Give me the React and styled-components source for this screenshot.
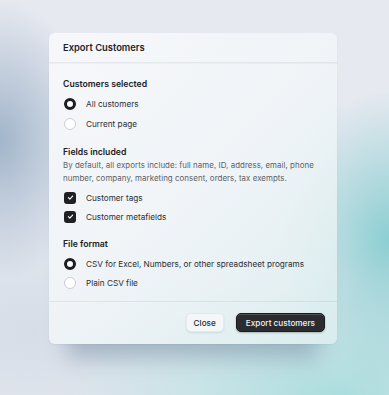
import React, { useState } from "react";
import styled, { createGlobalStyle } from "styled-components";

const GlobalStyle = createGlobalStyle`
  * { box-sizing: border-box; }
  html, body {
    margin: 0;
    padding: 0;
    width: 389px;
    height: 395px;
    overflow: hidden;
  }
  body {
    font-family: Inter, "Noto Sans", sans-serif;
    color: #1f2124;
    -webkit-font-smoothing: antialiased;
  }
`;

const Page = styled.div`
  width: 389px;
  height: 395px;
  padding: 33px 0 0 49px;
  background:
    radial-gradient(ellipse 95px 140px at 0px 140px, rgba(158, 178, 200, 0.95), rgba(158, 178, 200, 0) 100%),
    radial-gradient(ellipse 110px 150px at 389px 240px, rgba(135, 205, 208, 0.95), rgba(135, 205, 208, 0) 100%),
    radial-gradient(ellipse 280px 120px at 340px 395px, rgba(165, 220, 220, 0.9), rgba(165, 220, 220, 0) 100%),
    radial-gradient(ellipse 180px 130px at 30px 330px, rgba(212, 220, 230, 0.9), rgba(212, 220, 230, 0) 100%),
    #e6e9f0;
`;

const Dialog = styled.div`
  width: 288px;
  height: 311px;
  border-radius: 6px;
  display: flex;
  flex-direction: column;
  background: linear-gradient(
    135deg,
    rgba(247, 248, 251, 0.97) 0%,
    rgba(241, 245, 248, 0.92) 50%,
    rgba(220, 238, 239, 0.88) 100%
  );
  box-shadow:
    0 1px 2px rgba(40, 60, 80, 0.06),
    0 32px 20px -18px rgba(90, 115, 140, 0.4);
`;

const Header = styled.div`
  height: 30px;
  display: flex;
  align-items: center;
  padding: 0 14px;
  border-bottom: 1px solid rgba(30, 40, 60, 0.07);
  box-shadow: 0 1px 1px rgba(30, 40, 60, 0.03);
`;

const Title = styled.h2`
  margin: 0;
  font-size: 9.4px;
  font-weight: 600;
  color: #222428;
`;

const Body = styled.div`
  flex: 1;
  padding: 15px 14px 8px;
  display: flex;
  flex-direction: column;
  border-bottom: 1px solid rgba(30, 40, 60, 0.08);
`;

const Section = styled.div`
  display: flex;
  flex-direction: column;
  & + & {
    margin-top: ${(p) => p.$gap || 11}px;
  }
`;

const Heading = styled.div`
  font-size: 8.7px;
  font-weight: 600;
  line-height: 12px;
  color: #202226;
`;

const Desc = styled.p`
  margin: 1px 0 0;
  font-size: 7.9px;
  line-height: 13px;
  letter-spacing: 0.05px;
  color: #5b5f66;
`;

const Options = styled.div`
  display: flex;
  flex-direction: column;
  margin-top: ${(p) => p.$top}px;
`;

const Row = styled.label`
  height: ${(p) => p.$h || 20}px;
  display: flex;
  align-items: center;
  gap: 10px;
  padding-left: 1px;
  font-size: 8.2px;
  color: #2c2f33;
  cursor: pointer;
`;

const RadioDot = styled.span`
  width: 12px;
  height: 12px;
  border-radius: 50%;
  flex: none;
  background: #fff;
  border: ${(p) => (p.$on ? "3.5px solid #1c1d20" : "1px solid #c9ced5")};
`;

const Check = styled.span`
  width: 12px;
  height: 12px;
  border-radius: 3px;
  flex: none;
  background: #1f2023;
  display: flex;
  align-items: center;
  justify-content: center;
`;

const Footer = styled.div`
  flex: 1;
  display: flex;
  align-items: center;
  justify-content: flex-end;
  gap: 12px;
  padding: 0 12px 1px;
`;

const Button = styled.button`
  height: 19px;
  border-radius: 5px;
  font-family: Inter, "Noto Sans", sans-serif;
  font-size: 8.2px;
  font-weight: 500;
  padding: 0 ${(p) => (p.$primary ? 9 : 7)}px;
  cursor: pointer;
  color: ${(p) => (p.$primary ? "#f2f3f5" : "#2a2c30")};
  background: ${(p) => (p.$primary ? "#2b2c30" : "#f3f7f8")};
  border: 1px solid ${(p) => (p.$primary ? "#1a1b1e" : "rgba(30,40,60,0.06)")};
  box-shadow: ${(p) =>
    p.$primary
      ? "inset 0 1px 0 rgba(255,255,255,0.18), 0 1px 2px rgba(0,0,0,0.25)"
      : "0 1px 2px rgba(30,50,70,0.12)"};
`;

const CheckIcon = () => (
  <svg width="7" height="7" viewBox="0 0 10 10" fill="none">
    <path d="M2 5.2 L4.1 7.2 L8 2.9" stroke="#fff" strokeWidth="1.6" strokeLinecap="round" strokeLinejoin="round" />
  </svg>
);

export default function App() {
  const [who, setWho] = useState("all");
  const [format, setFormat] = useState("excel");
  const [tags, setTags] = useState(true);
  const [meta, setMeta] = useState(true);

  return (
    <Page>
      <GlobalStyle />
      <Dialog>
        <Header>
          <Title>Export Customers</Title>
        </Header>
        <Body>
          <Section>
            <Heading>Customers selected</Heading>
            <Options $top={4}>
              <Row onClick={() => setWho("all")}>
                <RadioDot $on={who === "all"} />
                All customers
              </Row>
              <Row onClick={() => setWho("page")}>
                <RadioDot $on={who === "page"} />
                Current page
              </Row>
            </Options>
          </Section>
          <Section $gap={11}>
            <Heading>Fields included</Heading>
            <Desc>
              By default, all exports include: full name, ID, address, email, phone
              number, company, marketing consent, orders, tax exempts.
            </Desc>
            <Options $top={3}>
              <Row $h={19} onClick={() => setTags(!tags)}>
                <Check>{tags && <CheckIcon />}</Check>
                Customer tags
              </Row>
              <Row $h={19} onClick={() => setMeta(!meta)}>
                <Check>{meta && <CheckIcon />}</Check>
                Customer metafields
              </Row>
            </Options>
          </Section>
          <Section $gap={12}>
            <Heading>File format</Heading>
            <Options $top={4}>
              <Row $h={19.5} onClick={() => setFormat("excel")}>
                <RadioDot $on={format === "excel"} />
                CSV for Excel, Numbers, or other spreadsheet programs
              </Row>
              <Row $h={19.5} onClick={() => setFormat("plain")}>
                <RadioDot $on={format === "plain"} />
                Plain CSV file
              </Row>
            </Options>
          </Section>
        </Body>
        <Footer>
          <Button>Close</Button>
          <Button $primary>Export customers</Button>
        </Footer>
      </Dialog>
    </Page>
  );
}
